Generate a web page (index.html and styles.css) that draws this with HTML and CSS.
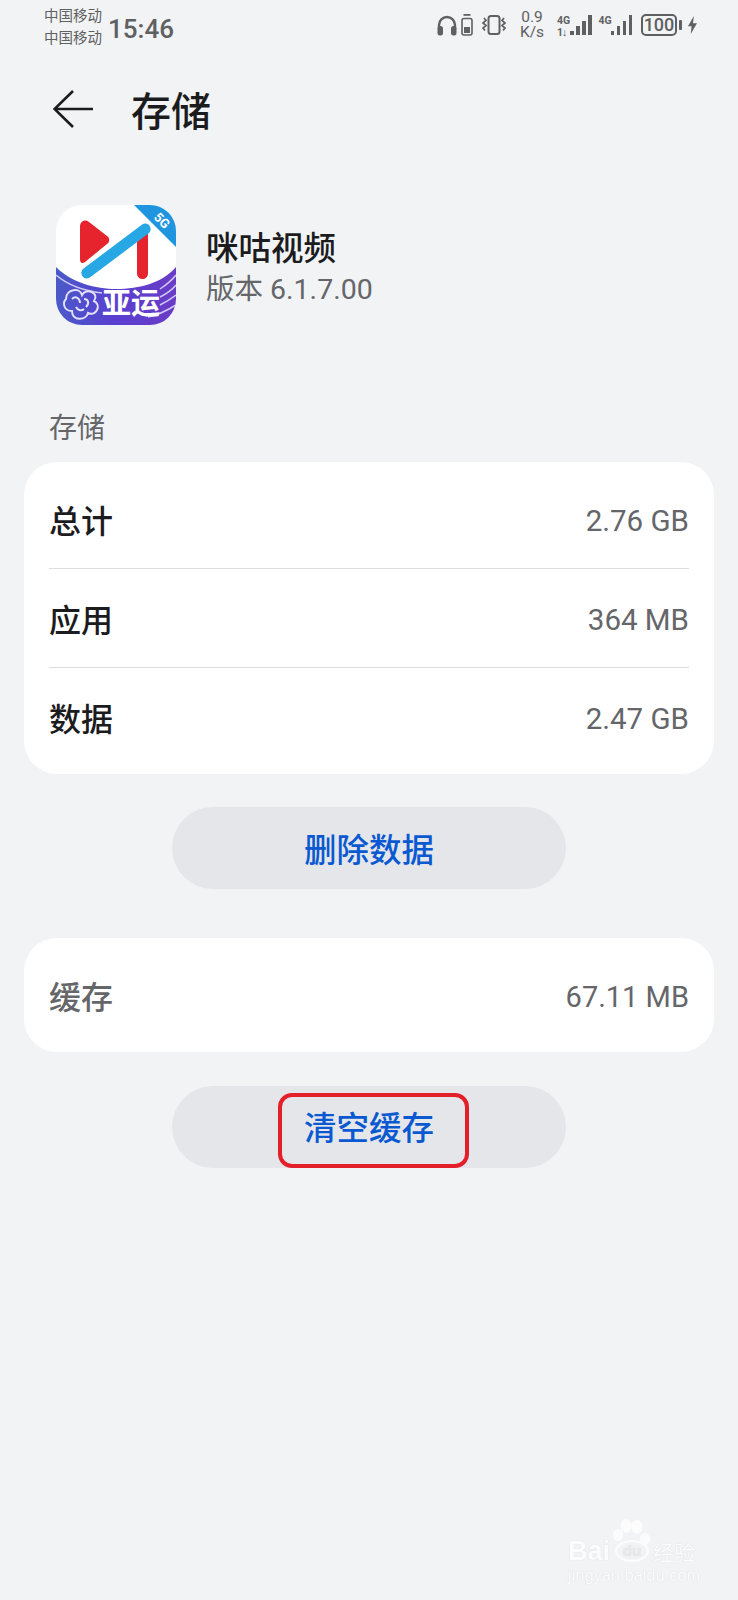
FILE: index.html

```html
<!DOCTYPE html>
<html lang="zh-CN">
<head>
  <meta charset="UTF-8" />
  <meta name="viewport" content="width=device-width, initial-scale=1" />
  <title>存储</title>
  <link rel="stylesheet" href="styles.css">
</head>
<body>

<!-- Barre d'état -->
<div class="status-bar">
  <div class="carriers">
    <div>中国移动</div>
    <div>中国移动</div>
  </div>
  <div class="clock">15:46</div>
  <div class="status-icons">
    <svg class="ic-headset" width="20" height="21" viewBox="0 0 20 21">
      <path d="M2 14V10a8 8 0 0 1 16 0v4" fill="none" stroke="#5f6062" stroke-width="2.400"/>
      <rect x="0.500" y="11" width="5.500" height="9.500" rx="2.500" fill="#5f6062"/>
      <rect x="14" y="11" width="5.500" height="9.500" rx="2.500" fill="#5f6062"/>
    </svg>
    <svg class="ic-battery-case" width="12" height="22" viewBox="0 0 12 22">
      <rect x="2.500" y="0" width="7" height="1.800" fill="#5f6062"/>
      <rect x="1" y="4.500" width="10" height="16.500" rx="2" fill="none" stroke="#5f6062" stroke-width="1.600"/>
      <rect x="3" y="13" width="6" height="6" fill="#5f6062"/>
    </svg>
    <svg class="ic-vibrate" width="26" height="20" viewBox="0 0 26 20">
      <rect x="7.500" y="1" width="11" height="18" rx="2.500" fill="none" stroke="#5f6062" stroke-width="2"/>
      <path d="M3 3l2 2.500-3 2.500 3 2.500-3 2.500 2 2.500M23 3l-2 2.500 3 2.500-3 2.500 3 2.500-2 2.500" fill="none" stroke="#5f6062" stroke-width="1.700"/>
    </svg>
    <div class="speed"><div>0.9</div><div>K/s</div></div>
    <div class="signal">
      <div class="net"><span>4G</span><span class="net-arrows">1↓</span></div>
      <div class="bars">
        <i class="b1"></i><i class="b2"></i><i class="b3"></i><i class="b4"></i>
      </div>
    </div>
    <div class="signal signal-2">
      <div class="net"><span>4G</span></div>
      <div class="bars">
        <i class="b1"></i><i class="b2"></i><i class="b3"></i><i class="b4"></i>
      </div>
    </div>
    <div class="battery"><div class="battery-body">100</div><div class="battery-tip"></div></div>
    <svg class="ic-bolt" width="9" height="20" viewBox="0 0 10 20">
      <path d="M6.500 0L0 11.500h4L3 20l7-12H5.500z" fill="#5f6062"/>
    </svg>
  </div>
</div>

<!-- Titre -->
<header class="title-bar">
  <svg class="back" width="42" height="40" viewBox="0 0 42 40">
    <path d="M40 20H3M20 2L1.500 20l18.500 18" fill="none" stroke="#1c1c1e" stroke-width="2.600"/>
  </svg>
  <h1>存储</h1>
</header>

<!-- Application -->
<section class="app-info">
  <svg class="app-icon" width="120" height="120" viewBox="0 0 120 120">
    <defs>
      <clipPath id="squircle"><rect width="120" height="120" rx="26"/></clipPath>
      <linearGradient id="band" x1="0" y1="0" x2="1" y2="0">
        <stop offset="0" stop-color="#4a5ac8"/>
        <stop offset="0.500" stop-color="#5a3fd0"/>
        <stop offset="1" stop-color="#6a3cc6"/>
      </linearGradient>
    </defs>
    <g clip-path="url(#squircle)">
      <rect width="120" height="120" fill="#fff"/>
      <path d="M0 62C16 78 40 84 60 84C84 84 106 78 120 62V120H0z" fill="url(#band)"/>
      <path d="M0 70C14 82 30 86 46 88M104 84C110 80 116 75 120 70M104 92C110 89 116 85 120 80M104 100C110 97 116 93 120 90M92 112C102 110 112 105 120 100" fill="none" stroke="#cfc8f5" stroke-width="1.500"/>
      <path d="M10 94C10 84 24 82 26 90C30 82 44 88 38 96C46 100 40 112 32 108C30 116 16 116 16 106C8 106 6 98 10 94z" fill="none" stroke="#e4e0fb" stroke-width="2"/>
      <path d="M16 94C20 90 24 94 24 98M28 94C32 94 34 98 30 102M20 102C22 106 26 106 28 104" fill="none" stroke="#e4e0fb" stroke-width="2"/>
      <path d="M78 0H120V42z" fill="#1f95e0"/>
      <text class="badge-5g" x="97" y="13" transform="rotate(45 97 13)">5G</text>
      <path d="M24 22C24 16 29 14 33 17L51 31C54 33 54 37 51 39L29 57C26 59 24 58 24 54z" fill="#e5242d"/>
      <path d="M81 33L92 22V68C92 76 81 76 81 68z" fill="#e5242d"/>
      <rect x="18" y="40.500" width="84" height="11" rx="5.500" transform="rotate(-37 60 46)" fill="#27a8e4"/>
      <text class="badge-asian" x="46" y="109">亚运</text>
    </g>
  </svg>
  <div class="app-text">
    <div class="app-name">咪咕视频</div>
    <div class="app-version">版本 6.1.7.00</div>
  </div>
</section>

<div class="section-label">存储</div>

<section class="card">
  <div class="row"><span class="row-name">总计</span><span class="row-value">2.76 GB</span></div>
  <div class="row"><span class="row-name">应用</span><span class="row-value">364 MB</span></div>
  <div class="row"><span class="row-name">数据</span><span class="row-value">2.47 GB</span></div>
</section>

<div class="btn">删除数据</div>

<section class="card card-cache">
  <div class="row"><span class="row-name muted">缓存</span><span class="row-value">67.11 MB</span></div>
</section>

<div class="btn btn-marked">
  <span class="marker">清空缓存</span>
</div>

<!-- Filigrane -->
<div class="watermark">
  <div class="wm-top">
    <span class="wm-bai">Bai</span>
    <span class="wm-du">du</span>
    <span class="wm-jy">经验</span>
    <svg class="wm-paw" width="40" height="32" viewBox="0 0 40 32">
      <ellipse cx="6" cy="17" rx="5" ry="6" fill="#fff"/>
      <ellipse cx="14" cy="8" rx="5.500" ry="7" fill="#fff"/>
      <ellipse cx="25" cy="9" rx="5.500" ry="7" fill="#fff"/>
      <ellipse cx="33" cy="21" rx="5" ry="6" fill="#fff"/>
    </svg>
  </div>
  <div class="wm-url">jingyan.baidu.com</div>
</div>

</body>
</html>
```

FILE: styles.css

```css
body {
  font-family: "Noto Sans CJK SC", Roboto, sans-serif;
  margin: 0;
  padding: 0;
  height: 1600px;
  overflow: hidden;
  background: #f1f3f5;
  color: #1c1c1e;
  position: relative;
}

/* Barre d'état */
.status-bar {
  height: 56px;
  padding-left: 44px;
  box-sizing: border-box;
  display: flex;
  align-items: flex-start;
  color: #5f6062;
}
.carriers {
  font-size: 14.5px;
  line-height: 22px;
  width: 64px;
  margin-top: 4px;
}
.clock {
  font-family: Roboto, sans-serif;
  font-size: 26px;
  font-weight: 500;
  line-height: 30px;
  margin-top: 14px;
}
.status-icons {
  margin-left: auto;
  margin-right: 41px;
  margin-top: 10px;
  height: 30px;
  display: flex;
  align-items: center;
}
.ic-headset { margin-right: 4px; }
.ic-battery-case { margin-right: 8px; }
.ic-vibrate { margin-right: 13px; }
.speed {
  font-family: Roboto, sans-serif;
  font-size: 15.5px;
  line-height: 15px;
  width: 24px;
  white-space: nowrap;
  text-align: center;
  margin-right: 13px;
}
.signal {
  display: flex;
  align-items: flex-end;
  height: 20px;
  margin-right: 7px;
}
.signal-2 { margin-right: 9px; }
.net {
  font-family: Roboto, sans-serif;
  font-size: 10.5px;
  font-weight: 700;
  line-height: 11px;
  width: 13px;
  white-space: nowrap;
  display: flex;
  flex-direction: column;
  align-self: flex-start;
}
.signal-2 .net { width: 12px; }
.net-arrows { letter-spacing: -1px; margin-top: 1px; }
.bars {
  display: flex;
  align-items: flex-end;
  gap: 2.500px;
}
.bars i {
  display: block;
  width: 3.500px;
  background: #5f6062;
}
.bars .b1 { height: 4px; }
.bars .b2 { height: 9px; }
.bars .b3 { height: 14px; }
.bars .b4 { height: 20px; }
.battery {
  display: flex;
  align-items: center;
  margin-right: 6px;
}
.battery-body {
  font-family: Roboto, sans-serif;
  font-size: 18px;
  font-weight: 500;
  line-height: 16px;
  width: 32px;
  text-align: center;
  border: 2px solid #5f6062;
  border-radius: 5px;
  padding: 1px 0;
}
.battery-tip {
  width: 3.500px;
  height: 10px;
  margin-left: 1.500px;
  background: #5f6062;
  border-radius: 1px;
}

/* Titre */
.title-bar {
  display: flex;
  align-items: center;
  height: 106px;
  padding-left: 53px;
}
.back { margin-right: 36px; }
.title-bar h1 {
  margin: 0;
  font-size: 40px;
  font-weight: 500;
  line-height: 56px;
}

/* Application */
.app-info {
  display: flex;
  align-items: center;
  margin-top: 43px;
  padding-left: 56px;
}
.app-text {
  margin: 5px 0 0 30px;
}
.app-name {
  font-size: 32.5px;
  font-weight: 500;
  line-height: 44px;
}
.app-version {
  font-family: Roboto, "Noto Sans CJK SC", sans-serif;
  font-size: 28.5px;
  line-height: 44px;
  color: #65666a;
}
.badge-5g {
  font-family: Roboto, sans-serif;
  font-size: 13px;
  font-weight: 700;
  fill: #fff;
}
.badge-asian {
  font-family: "Noto Sans CJK SC", sans-serif;
  font-size: 29px;
  font-weight: 700;
  fill: #fff;
}

.section-label {
  margin: 81px 0 0 49px;
  font-size: 28px;
  line-height: 40px;
  color: #65666a;
}

/* Cartes */
.card {
  margin: 16px 24px 0;
  padding: 8px 25px;
  background: #fff;
  border-radius: 33px;
}
.row {
  height: 98px;
  display: flex;
  justify-content: space-between;
  align-items: center;
  border-bottom: 1px solid #dcdddf;
}
.row:last-child {
  border-bottom: none;
}
.row-name {
  font-size: 32px;
  font-weight: 500;
}
.row-name.muted {
  color: #65666a;
}
.row-value {
  font-family: Roboto, sans-serif;
  font-size: 29.5px;
  padding-top: 4px;
  color: #65666a;
}
.card-cache {
  margin-top: 49px;
}
.card-cache .row-value {
  font-size: 29px;
}

/* Boutons */
.btn {
  width: 394px;
  height: 82px;
  margin: 33px auto 0;
  padding-bottom: 2px;
  box-sizing: border-box;
  background: #e4e6e9;
  border-radius: 41px;
  display: flex;
  align-items: center;
  justify-content: center;
  font-size: 32.5px;
  font-weight: 500;
  color: #0a59d1;
}
.btn-marked {
  margin-top: 34px;
  padding-bottom: 0;
}
.btn-marked .marker {
  width: 191px;
  height: 75px;
  margin: 7px 0 0 9px;
  padding: 0 9px 10px 0;
  box-sizing: border-box;
  border: 4px solid #e3202a;
  border-radius: 14px;
  display: flex;
  align-items: center;
  justify-content: center;
}

/* Filigrane */
.watermark {
  position: absolute;
  left: 568px;
  top: 1518px;
  width: 150px;
  color: #fff;
  opacity: 0.8;
  text-shadow: 0 0 1px #cfd2d6;
}
.wm-top {
  position: relative;
  height: 46px;
  display: flex;
  align-items: flex-end;
}
.wm-bai {
  font-family: "Liberation Sans", sans-serif;
  font-size: 27px;
  font-weight: 700;
  line-height: 26px;
  width: 47px;
}
.wm-du {
  font-family: "Liberation Sans", sans-serif;
  font-size: 15px;
  font-weight: 700;
  line-height: 18px;
  width: 30px;
  text-align: center;
  border: 2px solid #fff;
  border-radius: 50%;
  color: #e6e8eb;
  margin-bottom: 2px;
}
.wm-jy {
  font-size: 21px;
  line-height: 26px;
  margin-left: 4px;
}
.wm-paw {
  position: absolute;
  left: 44px;
  top: 0;
}
.wm-url {
  font-family: "Liberation Sans", sans-serif;
  font-size: 16.4px;
  line-height: 22px;
  white-space: nowrap;
}
```
